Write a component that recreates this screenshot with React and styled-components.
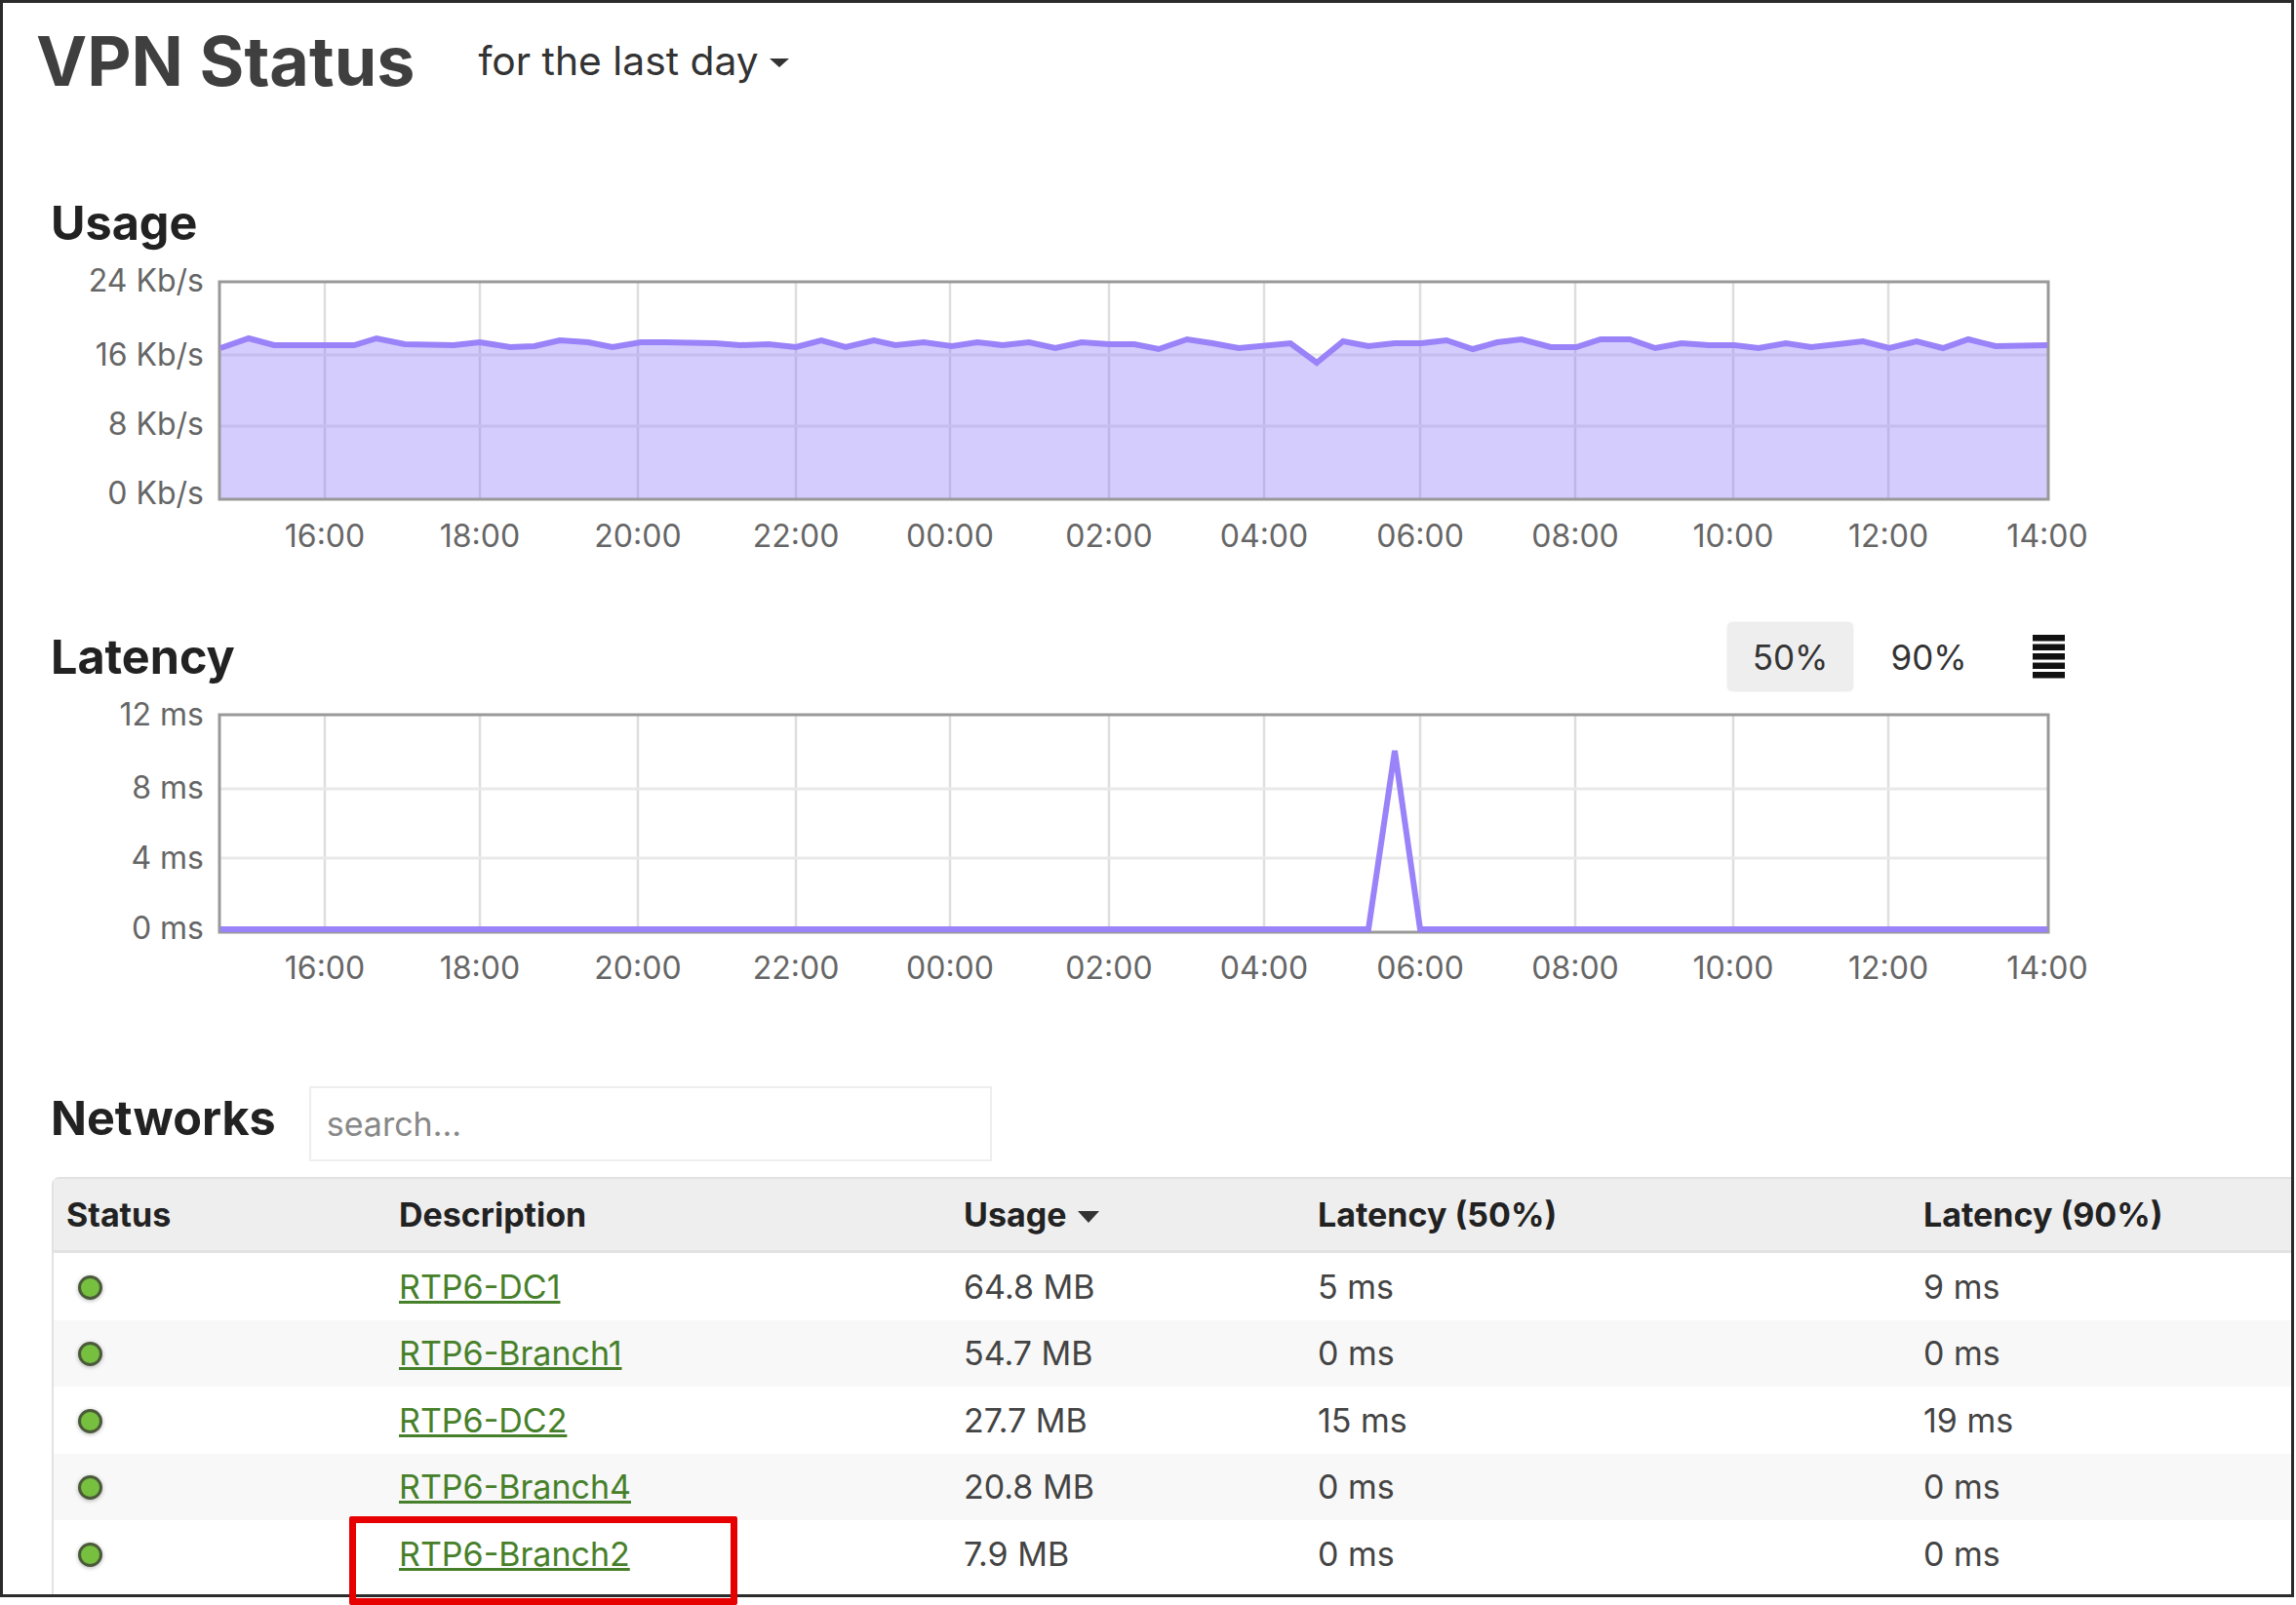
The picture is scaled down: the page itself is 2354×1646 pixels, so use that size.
import React from "react";
import styled, { createGlobalStyle } from "styled-components";

const GlobalStyle = createGlobalStyle`
  html, body {
    margin: 0;
    padding: 0;
    background: #fff;
  }
  body {
    font-family: Inter, "Liberation Sans", sans-serif;
    color: #333;
  }
`;

const gridX = [333, 492, 654, 816, 974, 1137, 1296, 1456, 1615, 1777, 1936];
const hours = ["16:00", "18:00", "20:00", "22:00", "00:00", "02:00", "04:00", "06:00", "08:00", "10:00", "12:00", "14:00"];

const usagePoints = [
  [226, 357], [255, 347], [281, 354], [363, 354], [386, 347], [415, 353], [465, 354], [492, 351],
  [523, 356], [548, 355], [574, 349], [603, 351], [628, 356], [657, 351], [682, 351], [733, 352],
  [759, 354], [788, 353], [816, 356], [842, 349], [867, 356], [896, 349], [918, 354], [947, 351],
  [976, 355], [1002, 351], [1028, 354], [1055, 351], [1082, 357], [1109, 351], [1137, 353], [1163, 353],
  [1188, 358], [1217, 348], [1243, 352], [1270, 357], [1323, 352], [1350, 372], [1377, 350], [1403, 355],
  [1430, 352], [1457, 352], [1483, 349], [1510, 358], [1535, 351], [1560, 348], [1590, 356], [1616, 356],
  [1641, 348], [1671, 348], [1697, 357], [1724, 352], [1752, 354], [1778, 354], [1803, 357], [1831, 352],
  [1857, 356], [1884, 353], [1910, 350], [1937, 357], [1965, 350], [1992, 357], [2018, 348], [2046, 355],
  [2099, 354],
];

const latencyPoints = [
  [226, 953], [1403, 953], [1430, 770], [1456, 953], [2099, 953],
];

const networks = [
  { name: "RTP6-DC1", usage: "64.8 MB", p50: "5 ms", p90: "9 ms" },
  { name: "RTP6-Branch1", usage: "54.7 MB", p50: "0 ms", p90: "0 ms" },
  { name: "RTP6-DC2", usage: "27.7 MB", p50: "15 ms", p90: "19 ms" },
  { name: "RTP6-Branch4", usage: "20.8 MB", p50: "0 ms", p90: "0 ms" },
  { name: "RTP6-Branch2", usage: "7.9 MB", p50: "0 ms", p90: "0 ms" },
];

// Coordinates below are page pixels, the viewBox shifts them into the svg
function Chart({ top, bottom, yLabels, gridY, points, filled, viewTop, labelGap }) {
  const line = points.map((p) => p.join(",")).join(" ");
  const area = `226,${bottom} ${line} 2099,${bottom}`;
  return (
    <ChartSvg viewBox={`3 ${viewTop} 2200 318`} width="2200" height="318">
      {gridX.map((x) => (
        <line key={x} x1={x} x2={x} y1={top} y2={bottom} stroke="#dedede" strokeWidth="2.5" />
      ))}
      {gridY.map((y) => (
        <line key={y} x1="225" x2="2100" y1={y} y2={y} stroke="#e9e9e9" strokeWidth="3" />
      ))}
      {filled && <polygon points={area} fill="rgba(130,110,245,0.35)" />}
      <rect x="225" y={top} width="1875" height={bottom - top} fill="none" stroke="#999" strokeWidth="3" />
      <polyline points={line} fill="none" stroke="#9a82f8" strokeWidth="6" strokeLinejoin="miter" />
      {yLabels.map(([label, y]) => (
        <AxisText key={label} x="209" y={y} textAnchor="end">{label}</AxisText>
      ))}
      {hours.map((h, i) => (
        <AxisText key={h} x={i < 11 ? gridX[i] : 2099} y={bottom + labelGap} textAnchor="middle">{h}</AxisText>
      ))}
    </ChartSvg>
  );
}

function StackIcon() {
  return (
    <svg width="33" height="45" viewBox="0 0 33 45">
      <rect x="0" y="0" width="33" height="6.5" fill="#111" />
      <rect x="0" y="9.5" width="33" height="6.5" fill="#111" />
      <rect x="0" y="19" width="33" height="6.5" fill="#111" />
      <rect x="0" y="28.5" width="33" height="6.5" fill="#111" />
      <rect x="0" y="38" width="33" height="6.5" fill="#111" />
    </svg>
  );
}

export default function App() {
  return (
    <>
      <GlobalStyle />
      <Page>
        <Frame>
          <TitleBar>
            <Title>VPN Status</Title>
            <RangeSelect>
              for the last day
              <Caret />
            </RangeSelect>
          </TitleBar>

          <UsageHeading>Usage</UsageHeading>
          <Chart
            viewTop={262}
            top={289}
            bottom={512}
            labelGap={49}
            gridY={[364, 437]}
            points={usagePoints}
            filled
            yLabels={[["24 Kb/s", 299], ["16 Kb/s", 375], ["8 Kb/s", 446], ["0 Kb/s", 517]]}
          />

          <LatencyBar>
            <SectionHeading>Latency</SectionHeading>
            <Toggles>
              <Toggle $active>50%</Toggle>
              <Toggle>90%</Toggle>
              <IconButton><StackIcon /></IconButton>
            </Toggles>
          </LatencyBar>
          <Chart
            viewTop={705}
            top={733}
            bottom={956}
            labelGap={48}
            gridY={[809, 880]}
            points={latencyPoints}
            yLabels={[["12 ms", 744], ["8 ms", 819], ["4 ms", 891], ["0 ms", 963]]}
          />

          <NetworksBar>
            <NetworksHeading>Networks</NetworksHeading>
            <SearchInput placeholder="search..." />
          </NetworksBar>

          <Table>
            <colgroup>
              <col width="341" />
              <col width="579" />
              <col width="363" />
              <col width="621" />
              <col width="460" />
            </colgroup>
            <thead>
              <tr>
                <Th>Status</Th>
                <Th>Description</Th>
                <Th>Usage<SortCaret /></Th>
                <Th>Latency (50%)</Th>
                <Th>Latency (90%)</Th>
              </tr>
            </thead>
            <tbody>
              {networks.map((n, i) => (
                <Row key={n.name} $odd={i % 2 === 1}>
                  <Td><Dot /></Td>
                  <Td><NetLink href="#">{n.name}</NetLink></Td>
                  <Td>{n.usage}</Td>
                  <Td>{n.p50}</Td>
                  <Td>{n.p90}</Td>
                </Row>
              ))}
              <Row>
                <Td colSpan={5} />
              </Row>
            </tbody>
          </Table>
        </Frame>
        <Callout />
      </Page>
    </>
  );
}

const Page = styled.div`
  position: relative;
  width: 2354px;
  height: 1646px;
  overflow: hidden;
`;

const Frame = styled.div`
  box-sizing: border-box;
  width: 2352px;
  height: 1638px;
  border: 3px solid #2b2b2b;
  overflow: hidden;
`;

const TitleBar = styled.div`
  display: flex;
  align-items: center;
  height: 118px;
  padding-left: 34px;
`;

const Title = styled.h1`
  margin: 0;
  font-size: 70px;
  font-weight: 700;
  color: #3f3f3f;
`;

const RangeSelect = styled.div`
  display: flex;
  align-items: center;
  margin-left: 65px;
  font-size: 40.8px;
  color: #333;
`;

const Caret = styled.span`
  width: 0;
  height: 0;
  margin-left: 11px;
  margin-top: 5px;
  border-left: 10px solid transparent;
  border-right: 10px solid transparent;
  border-top: 9px solid #333;
`;

const SectionHeading = styled.h2`
  margin: 0;
  font-size: 48.5px;
  font-weight: 700;
  color: #222;
  line-height: 56px;
`;

const UsageHeading = styled(SectionHeading)`
  padding: 80px 0 0 49px;
  height: 61px;
`;

const NetworksHeading = styled(SectionHeading)`
  margin-bottom: 10px;
`;

const ChartSvg = styled.svg`
  display: block;
`;

const AxisText = styled.text`
  font-family: Inter, "Liberation Sans", sans-serif;
  font-size: 32px;
  fill: #666;
`;

const LatencyBar = styled.div`
  display: flex;
  align-items: center;
  justify-content: space-between;
  box-sizing: border-box;
  height: 125px;
  padding: 62px 232px 0 49px;
`;

const Toggles = styled.div`
  display: flex;
  align-items: center;
`;

const Toggle = styled.button`
  box-sizing: border-box;
  width: 127px;
  height: 69px;
  margin-right: 15px;
  padding: 0;
  border: none;
  border-radius: 4px;
  font-family: inherit;
  font-size: 35px;
  color: #333;
  background: ${(p) => (p.$active ? "#eee" : "transparent")};
  box-shadow: ${(p) => (p.$active ? "0 0 3px rgba(0,0,0,0.2)" : "none")};
`;

const IconButton = styled.div`
  display: flex;
  margin-left: 28px;
`;

const NetworksBar = styled.div`
  display: flex;
  align-items: center;
  height: 92px;
  padding: 83px 0 0 49px;
`;

const SearchInput = styled.input`
  box-sizing: border-box;
  width: 700px;
  height: 77px;
  margin-left: 34px;
  padding: 0 16px;
  border: 2px solid #eee;
  outline: none;
  font-family: inherit;
  font-size: 34px;
  color: #333;

  &::placeholder {
    color: #888;
  }
`;

const Table = styled.table`
  width: 2364px;
  margin: 9px 0 0 50px;
  table-layout: fixed;
  border-collapse: separate;
  border-spacing: 0;
  border-left: 2px solid #e2e2e2;
  border-top: 2px solid #e2e2e2;
  border-top-left-radius: 8px;
  font-size: 34px;
  color: #444;
`;

const Th = styled.th`
  height: 73px;
  padding: 0 0 0 13px;
  text-align: left;
  font-weight: 700;
  color: #222;
  background: #eee;
  border-bottom: 3px solid #e2e2e2;
`;

const SortCaret = styled.span`
  display: inline-block;
  width: 0;
  height: 0;
  margin-left: 12px;
  vertical-align: 4px;
  border-left: 11px solid transparent;
  border-right: 11px solid transparent;
  border-top: 12px solid #333;
`;

const Row = styled.tr`
  background: ${(p) => (p.$odd ? "#f8f8f8" : "#fff")};
`;

const Td = styled.td`
  height: 68.5px;
  padding: 0 0 0 13px;
`;

const Dot = styled.span`
  display: block;
  box-sizing: border-box;
  width: 25px;
  height: 25px;
  margin: 2px 0 0 12px;
  border-radius: 50%;
  background: #76bf3f;
  border: 3px solid #4a5a3a;
  box-shadow: 0 1px 4px rgba(0, 0, 0, 0.3);
`;

const NetLink = styled.a`
  color: #47802a;
  text-decoration: underline;
`;

const Callout = styled.div`
  position: absolute;
  left: 358px;
  top: 1555px;
  box-sizing: border-box;
  width: 398px;
  height: 91px;
  border: 7px solid #e60000;
  border-radius: 2px;
`;
